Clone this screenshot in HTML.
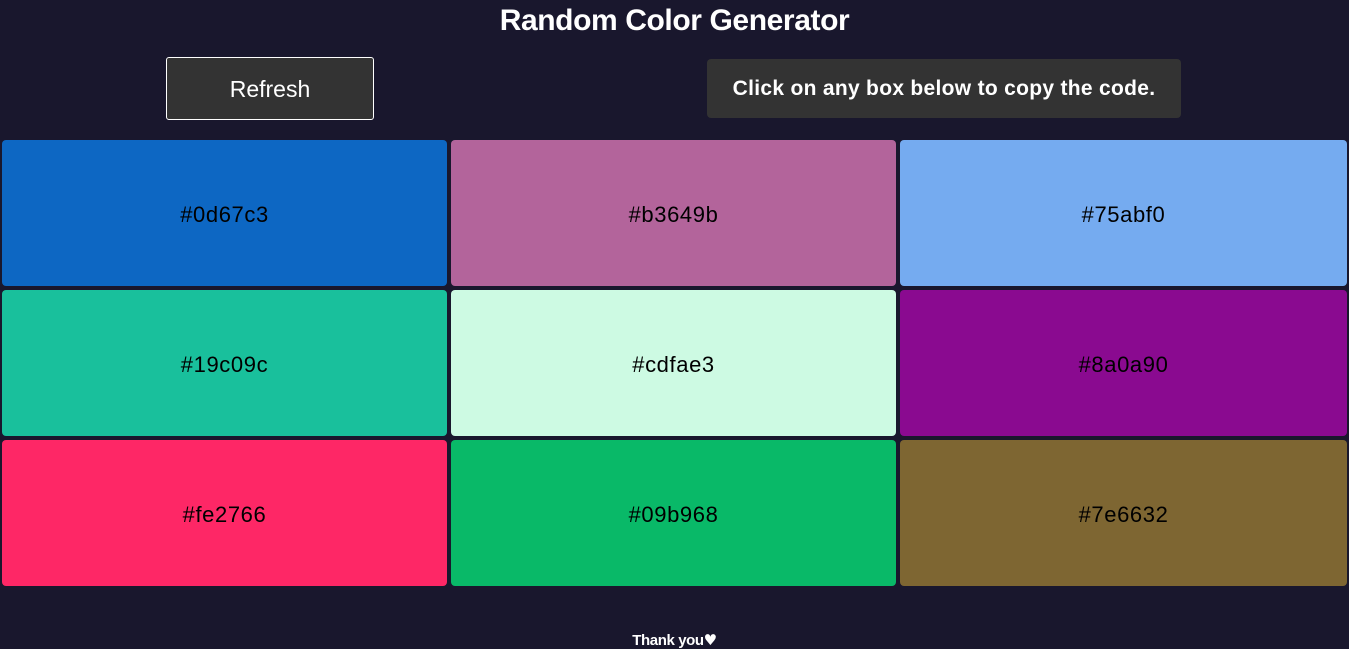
<!DOCTYPE html>
<html><head><style>
body{margin:0;background:#19172d;width:1349px;height:649px;overflow:hidden;font-family:"Liberation Sans",sans-serif;position:relative}
h1{position:absolute;top:1px;left:0;width:1349px;margin:0;text-align:center;color:#fff;font-size:30px;line-height:40px;letter-spacing:-0.4px;font-weight:bold}
.btn{position:absolute;left:166px;top:57px;width:206px;height:61px;background:#333;border:1px solid #fff;border-radius:3px;color:#fff;font-size:23px;line-height:62px;text-align:center}
.info{position:absolute;left:707px;top:59px;width:474px;height:59px;background:#333;border-radius:4px;color:#fff;font-size:21px;font-weight:bold;line-height:60px;text-align:center;letter-spacing:0.3px}
.b{position:absolute;width:445px;height:146px;border-radius:4px;font-size:22px;line-height:150px;text-align:center;color:#000;letter-spacing:0.6px}
.ty{position:absolute;top:631px;left:0;width:1349px;text-align:center;color:#fff;font-size:15px;font-weight:bold;letter-spacing:-0.4px}
</style></head><body>
<h1>Random Color Generator</h1>
<div class="btn">Refresh</div>
<div class="info">Click on any box below to copy the code.</div>
<div class="b" style="left:2px;top:140px;background:#0d67c3">#0d67c3</div>
<div class="b" style="left:451px;top:140px;background:#b3649b">#b3649b</div>
<div class="b" style="left:900px;top:140px;width:447px;background:#75abf0">#75abf0</div>
<div class="b" style="left:2px;top:290px;background:#19c09c">#19c09c</div>
<div class="b" style="left:451px;top:290px;background:#cdfae3">#cdfae3</div>
<div class="b" style="left:900px;top:290px;width:447px;background:#8a0a90">#8a0a90</div>
<div class="b" style="left:2px;top:440px;background:#fe2766">#fe2766</div>
<div class="b" style="left:451px;top:440px;background:#09b968">#09b968</div>
<div class="b" style="left:900px;top:440px;width:447px;background:#7e6632">#7e6632</div>
<div class="ty">Thank you<span style="font-family:'DejaVu Sans'">♥</span></div>
</body></html>
